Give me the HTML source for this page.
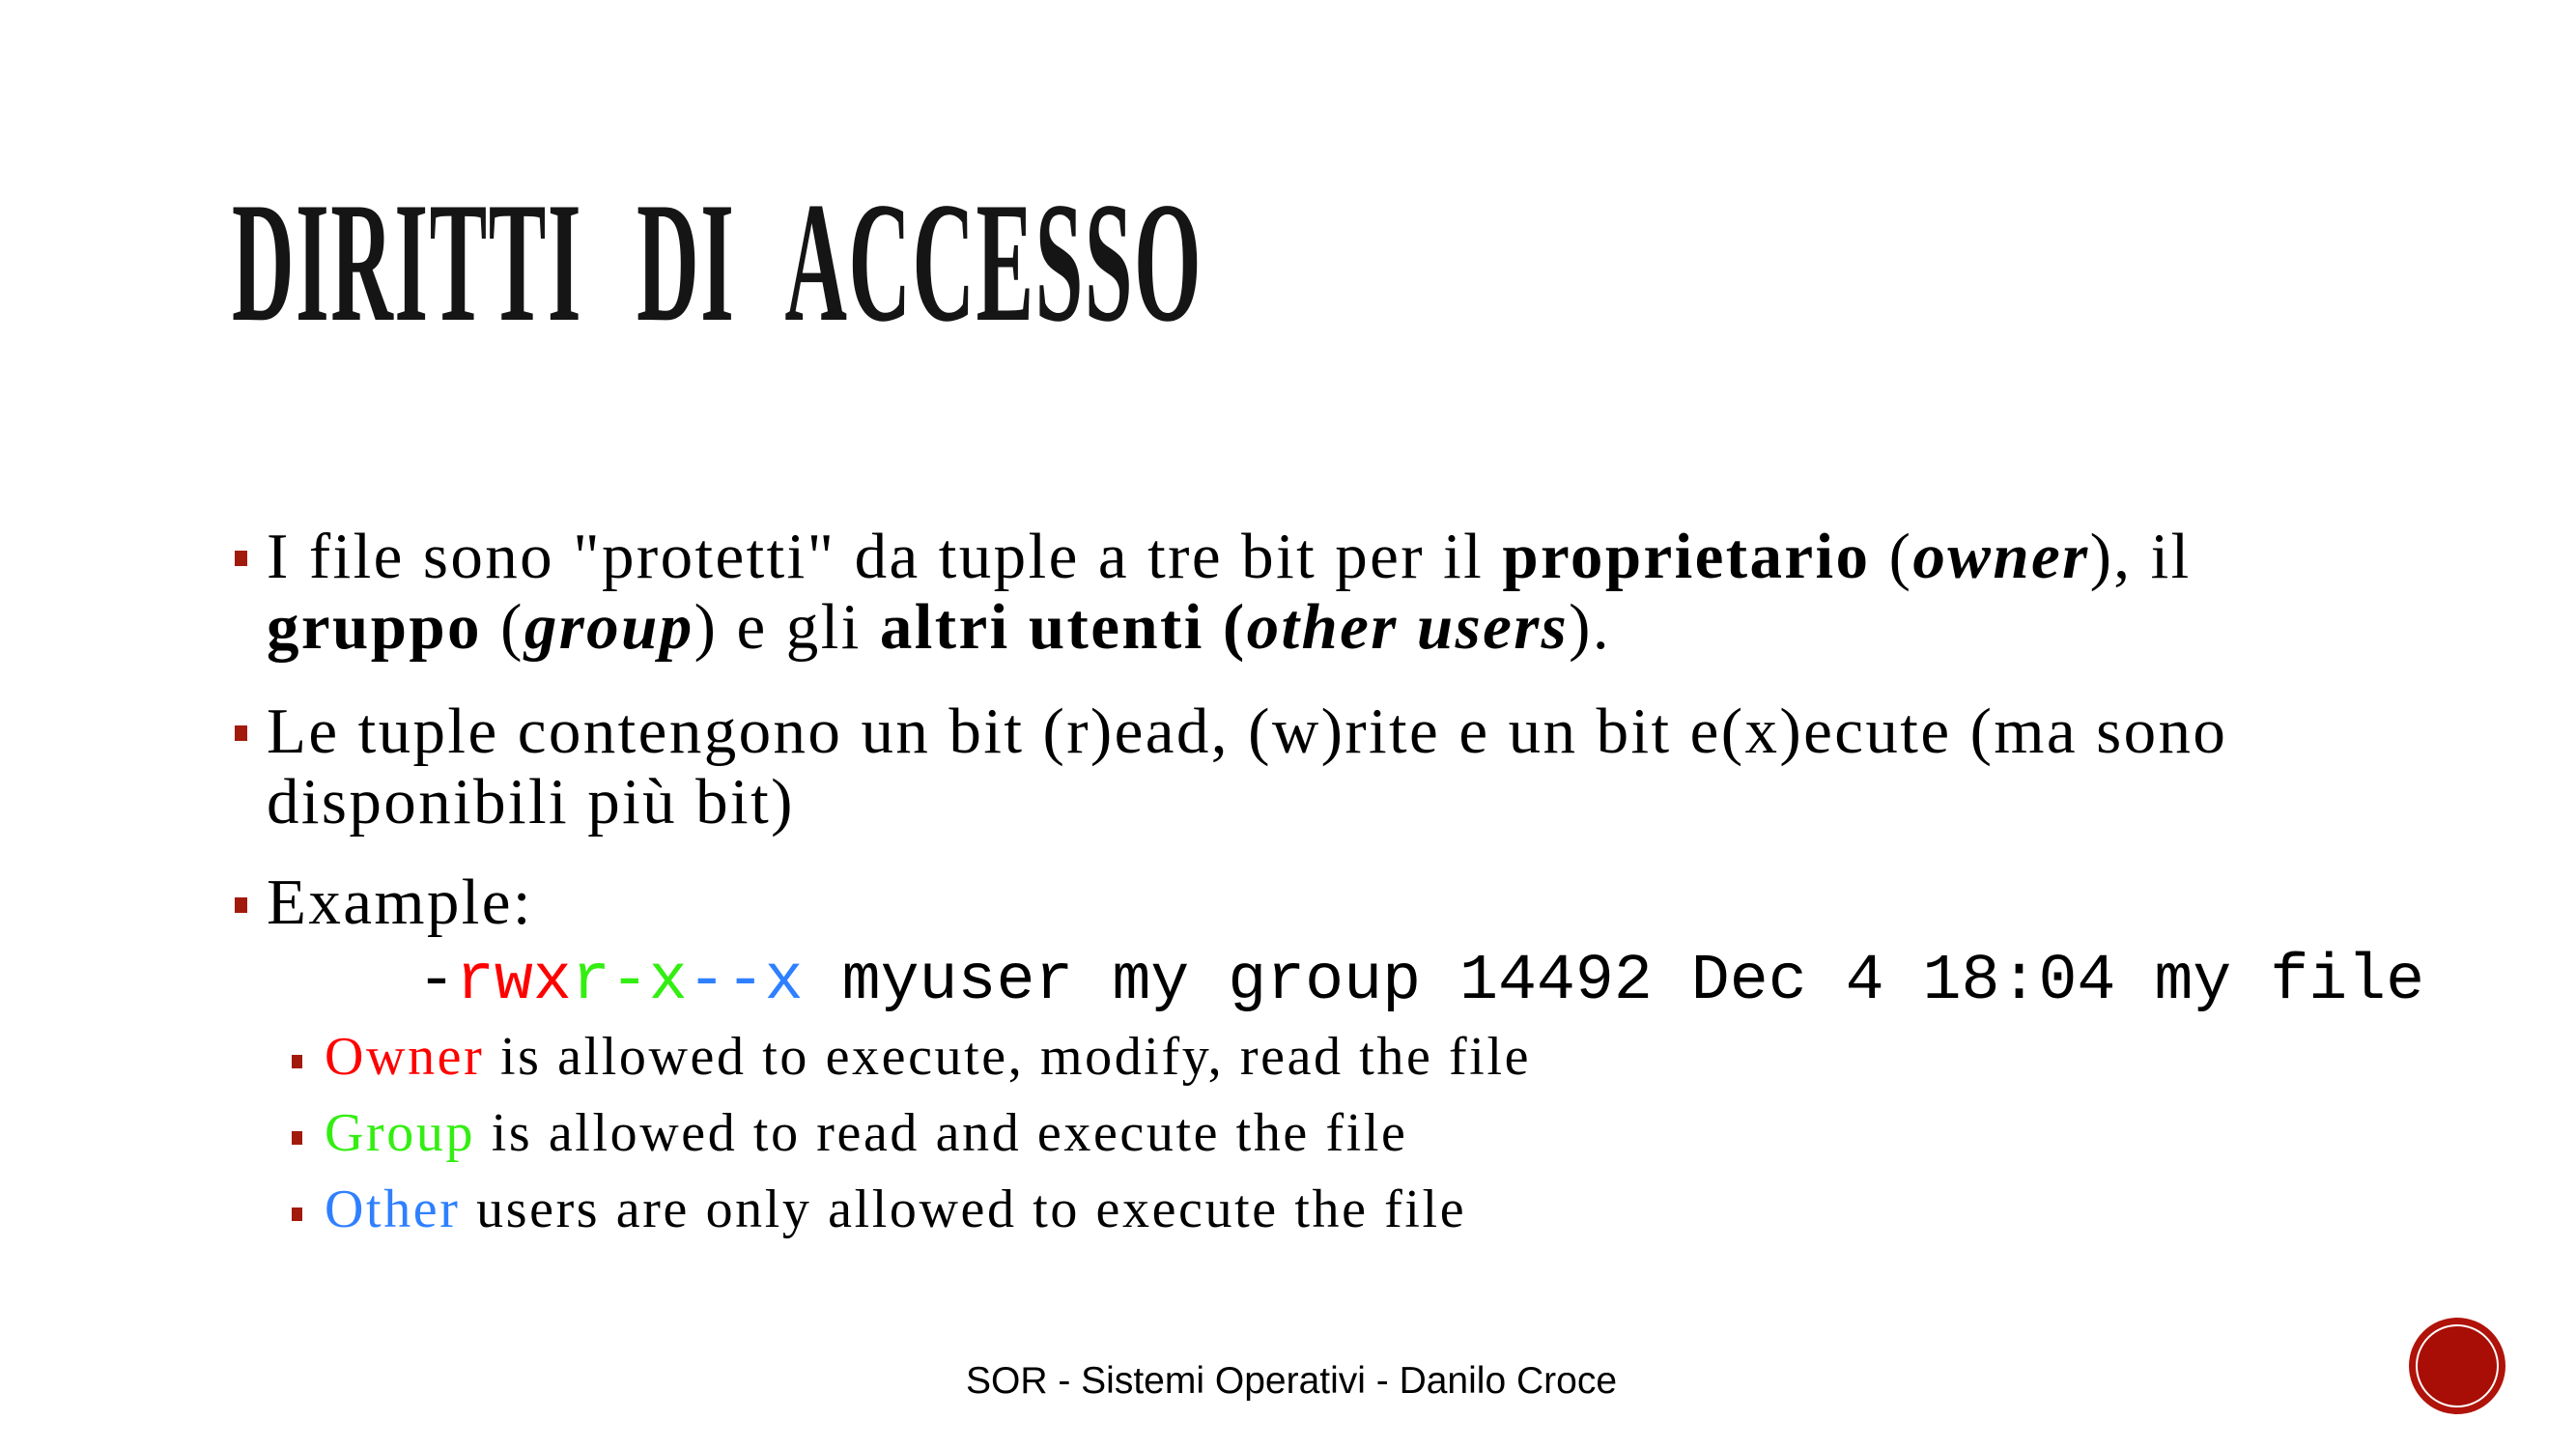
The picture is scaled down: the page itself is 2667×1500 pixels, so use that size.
<!DOCTYPE html>
<html><head><meta charset="utf-8"><style>
html,body{margin:0;padding:0;background:#fff;}
body{width:2667px;height:1500px;position:relative;overflow:hidden;font-family:"Liberation Serif",serif;color:#000;}
.t{position:absolute;white-space:nowrap;}
h1{position:absolute;left:240px;top:182px;margin:0;font:bold 178px/1 "Liberation Serif",serif;transform:scaleX(0.502);transform-origin:0 0;color:#151515;letter-spacing:3px;word-spacing:64px;white-space:nowrap;}
.b{position:absolute;width:13px;height:16px;background:#a21a0c;}
.l{font-size:67px;letter-spacing:2.4px;}
.s{font-size:56px;letter-spacing:2.6px;}
.code{font-family:"Liberation Mono",monospace;font-size:66.6px;}
</style></head><body>
<h1>DIRITTI DI ACCESSO</h1>

<div class="b" style="left:243px;top:570px"></div>
<div class="t l" style="left:276px;top:538px">I file sono "protetti" da tuple a tre bit per il <b>proprietario</b> (<b><i>owner</i></b>), il</div>
<div class="t l" style="left:276px;top:611px"><b>gruppo</b> (<b><i>group</i></b>) e gli <b>altri utenti (<i>other users</i></b>).</div>

<div class="b" style="left:243px;top:751px"></div>
<div class="t l" style="left:276px;top:719px">Le tuple contengono un bit (r)ead, (w)rite e un bit e(x)ecute (ma sono</div>
<div class="t l" style="left:276px;top:792px">disponibili più bit)</div>

<div class="b" style="left:243px;top:929px"></div>
<div class="t l" style="left:276px;top:896px">Example:</div>

<div class="t code" style="left:432px;top:978px">-<span style="color:#f00">rwx</span><span style="color:#33ee11">r-x</span><span style="color:#2f80ff">--x</span> myuser my group 14492 Dec 4 18:04 my file</div>

<div class="b" style="left:302px;top:1092px;width:11px;height:14px"></div>
<div class="t s" style="left:336px;top:1062px"><span style="color:#f00">Owner</span> is allowed to execute, modify, read the file</div>
<div class="b" style="left:302px;top:1171px;width:11px;height:14px"></div>
<div class="t s" style="left:336px;top:1141px"><span style="color:#33ee11">Group</span> is allowed to read and execute the file</div>
<div class="b" style="left:302px;top:1250px;width:11px;height:14px"></div>
<div class="t s" style="left:336px;top:1220px"><span style="color:#2f80ff">Other</span> users are only allowed to execute the file</div>

<div class="t" style="left:1000px;top:1408px;font:39px 'Liberation Sans',sans-serif;">SOR - Sistemi Operativi - Danilo Croce</div>

<div style="position:absolute;left:2494px;top:1364px;width:100px;height:100px;border-radius:50%;background:#b0130a;"></div>
<div style="position:absolute;left:2501px;top:1371px;width:82px;height:82px;border-radius:50%;border:2px solid #fff;background:#a80e05;"></div>
</body></html>
